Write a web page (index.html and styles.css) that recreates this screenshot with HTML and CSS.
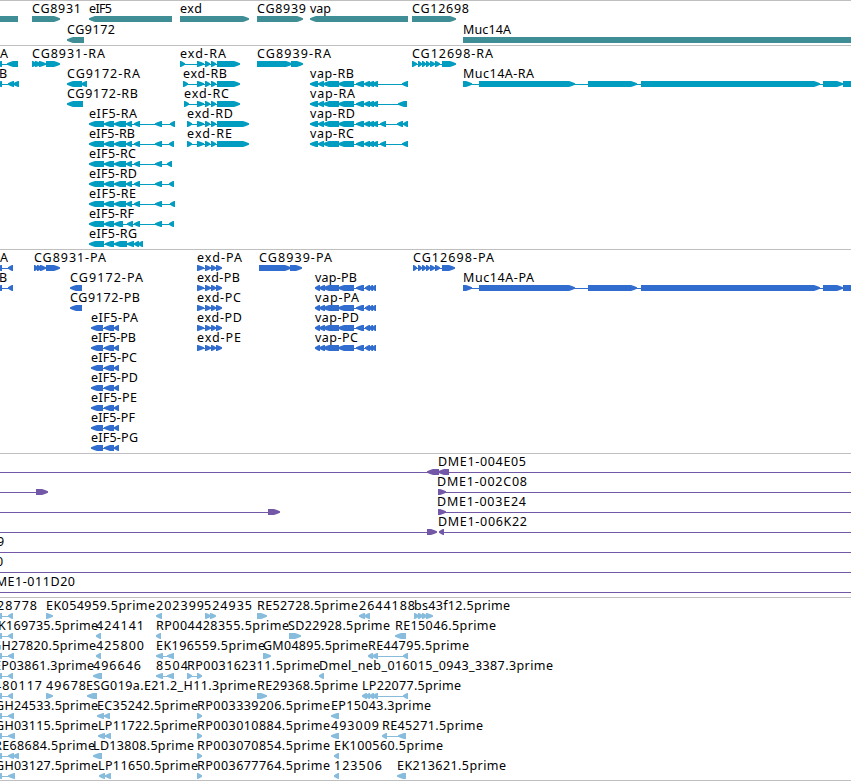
FILE: index.html
```html
<!DOCTYPE html>
<html lang="en">
<head>
    <meta charset="UTF-8">
    <title>Genome tracks</title>
    <link rel="stylesheet" href="styles.css">
</head>
<body>
    <main id="browser"></main>
    <script src="tracks.js"></script>
</body>
</html>
```

FILE: styles.css
```css
body {
    margin: 0;
    background: #fff;
    overflow: hidden;
}
#browser {
    width: 851px;
    border-bottom: 1px solid #bfbfbf;
}
.track {
    border-top: 1px solid #bfbfbf;
    padding-bottom: 3px;
}
.row {
    display: block;
    width: 851px;
    height: 20px;
    overflow: visible;
}
.row text {
    font: 12.5px "Noto Sans", sans-serif;
    fill: #000;
}
.genes {
    color: #3f8e95;
    padding-bottom: 2px;
}
.genes .row {
    height: 21px;
}
.transcripts {
    color: #009dc0;
}
.proteins {
    color: #316dce;
}
.clones {
    color: #7358a8;
}
.ests {
    color: #87bcdd;
    padding-bottom: 2px;
}
.row path,
.row rect {
    fill: currentColor;
}
```

FILE: tracks.js
```js
// feature: [label, label start, label end, strand, [exon start, exon end, ...]]
const exdR = [197,204, 205,210, 211,216];
const exdP = [197,204, 205,211, 211,216, 216,222];
const vapR = [310,318, 318,324, 323,339, 338,354, 356,364, 364,370, 368,374, 372,378];
const vapP = [315,320, 319,325, 323,339, 338,354, 356,364, 365,370, 369,373, 372,376];
const eifR = [89,104, 104,114, 114,126, 126,132, 134,140, 155,162];
const eifP = [91,103, 104,114, 114,119];
const muc = [463,472, 479,575, 588,637, 641,820, 823,843, 843,870];
const L = -30, R = 880;

const tracks = [
    { name: 'genes', rows: [
        [['', 0, 0, '-', [L,18]],
         ['CG8931', 32, 81, '+', [32,60]],
         ['eIF5', 89, 112, '-', [89,172]],
         ['exd', 180, 202, '+', [180,249]],
         ['CG8939', 257, 306, '+', [257,303]],
         ['vap', 310, 331, '-', [310,408]],
         ['CG12698', 412, 469, '+', [412,456]]],
        [['CG9172', 67, 115, '-', [67,84]],
         ['Muc14A', 463, 511, '+', [463,R]]]
    ]},
    { name: 'transcripts', rows: [
        [['A', 0, 8, '-', [-4,2, 7,18]],
         ['CG8931-RA', 32, 105, '+', [32,37, 35,41, 39,46, 46,60]],
         ['exd-RA', 180, 226, '+', [180,185, ...exdR, 217,240]],
         ['CG8939-RA', 257, 331, '+', [257,292, 291,303]],
         ['CG12698-RA', 412, 493, '+', [412,417, 418,422, 422,426, 426,430, 430,435, 435,440, 442,456]]],
        [['B', -1, 6, '-', [-4,2, 8,14, 13,19]],
         ['CG9172-RA', 67, 140, '-', [67,82, 81,87]],
         ['exd-RB', 183, 227, '+', [183,188, ...exdR, 217,240]],
         ['vap-RB', 310, 354, '-', [...vapR, 402,408]],
         ['Muc14A-RA', 463, 534, '+', muc]],
        [['CG9172-RB', 67, 138, '-', [67,83]],
         ['exd-RC', 184, 229, '+', [184,189, ...exdR, 217,240]],
         ['vap-RA', 310, 355, '-', [...vapR, 398,407]]],
        [['eIF5-RA', 89, 137, '-', [...eifR, 170,175]],
         ['exd-RD', 187, 233, '+', [187,192, ...exdR, 217,249]],
         ['vap-RD', 310, 355, '-', [...vapR, 380,386, 397,403, 403,408]]],
        [['eIF5-RB', 89, 135, '-', [...eifR, 169,174]],
         ['exd-RE', 187, 232, '+', [187,192, ...exdR, 217,249]],
         ['vap-RC', 310, 354, '-', [...vapR, 380,386, 402,408]]],
        [['eIF5-RC', 89, 136, '-', [...eifR, 167,172]]],
        [['eIF5-RD', 89, 137, '-', [...eifR, 169,174]]],
        [['eIF5-RE', 89, 136, '-', [...eifR, 170,175]]],
        [['eIF5-RF', 89, 134, '-', [89,104, 104,114, 114,123, 127,133, 134,140, 155,162, 169,174]]],
        [['eIF5-RG', 89, 137, '-', [89,104, 105,114, 114,127, 127,134, 134,139, 138,143]]]
    ]},
    { name: 'proteins', rows: [
        [['A', 0, 9, '-', [-4,2, 8,13]],
         ['CG8931-PA', 34, 106, '+', [34,38, 37,42, 40,46, 46,60]],
         ['exd-PA', 197, 242, '+', exdP],
         ['CG8939-PA', 259, 332, '+', [259,291, 290,302]],
         ['CG12698-PA', 413, 494, '+', [413,417, 418,422, 422,426, 426,430, 430,435, 435,440, 442,455]]],
        [['B', -1, 7, '-', [-4,2, 8,13]],
         ['CG9172-PA', 70, 143, '-', [70,82]],
         ['exd-PB', 197, 240, '+', exdP],
         ['vap-PB', 315, 357, '-', vapP],
         ['Muc14A-PA', 463, 534, '+', muc]],
        [['CG9172-PB', 70, 140, '-', [70,82]],
         ['exd-PC', 197, 241, '+', exdP],
         ['vap-PA', 315, 359, '-', vapP]],
        [['eIF5-PA', 91, 138, '-', eifP],
         ['exd-PD', 197, 242, '+', exdP],
         ['vap-PD', 315, 359, '-', vapP]],
        [['eIF5-PB', 91, 136, '-', eifP],
         ['exd-PE', 197, 241, '+', exdP],
         ['vap-PC', 315, 358, '-', vapP]],
        [['eIF5-PC', 91, 137, '-', eifP]],
        [['eIF5-PD', 91, 138, '-', eifP]],
        [['eIF5-PE', 91, 137, '-', eifP]],
        [['eIF5-PF', 91, 135, '-', eifP]],
        [['eIF5-PG', 91, 138, '-', eifP]]
    ]},
    { name: 'clones', rows: [
        [['', 0, 0, '-', [L,-20, 427,439]],
         ['DME1-004E05', 438, 526, '-', [438,449, 870,R]]],
        [['', 0, 0, '+', [L,-20, 36,48]],
         ['DME1-002C08', 437, 527, '+', [438,446, 870,R]]],
        [['', 0, 0, '+', [L,-20, 268,280]],
         ['DME1-003E24', 437, 526, '+', [438,446, 870,R]]],
        [['', 0, 0, '+', [L,-20, 427,437]],
         ['DME1-006K22', 438, 527, '-', [439,444, 870,R]]],
        [['9', -3, 5, '+', [L,-20, 870,R]]],
        [['0', -4, 4, '+', [L,-20, 870,R]]],
        [['DME1-011D20', -14, 75, '+', [L,-20, 870,R]]]
    ]},
    { name: 'ests', rows: [
        [['28778', -3, 37, '-', [-4,2, 8,13]],
         ['EK054959.5prime', 46, 155, '+', [46,53]],
         ['202399', 156, 204, '-', [156,162]],
         ['524935', 204, 252, '+', [205,211, 210,216]],
         ['RE52728.5prime', 257, 358, '+', [257,267]],
         ['2644188', 359, 415, '-', [359,365, 364,370]],
         ['bs43f12.5prime', 414, 510, '+', [414,419, 418,423, 422,427, 426,433]]],
        [['K169735.5prime', -2, 98, '-', [-4,2, 8,13]],
         ['424141', 96, 144, '-', [96,101]],
         ['RP004428355.5prime', 156, 289, '-', [156,161]],
         ['SD22928.5prime', 288, 390, '+', [289,301]],
         ['RE15046.5prime', 395, 496, '-', [395,406]]],
        [['GH27820.5prime', -8, 96, '-', [-4,2, 8,14]],
         ['425800', 96, 144, '-', [96,101]],
         ['EK196559.5prime', 156, 265, '-', [156,163, 167,174]],
         ['GM04895.5prime', 263, 368, '+', [263,271]],
         ['RE44795.5prime', 368, 469, '-', [368,373, 372,378, 403,408]]],
        [['EP03861.3prime', -6, 94, '-', [-4,2, 8,13]],
         ['496646', 93, 141, '-', [93,102]],
         ['8504', 156, 188, '-', [156,163, 167,174]],
         ['RP003162311.5prime', 187, 320, '+', [187,192, 197,202]],
         ['Dmel_neb_016015_0943_3387.3prime', 319, 553, '-', [319,324]]],
        [['480117', -6, 42, '-', [-4,2, 8,13]],
         ['49678', 46, 86, '+', [46,53]],
         ['ESG019a.E21.2_H11.3prime', 86, 256, '-', [87,97]],
         ['RE29368.5prime', 257, 358, '+', [257,267]],
         ['LP22077.5prime', 362, 461, '-', [362,367, 366,370, 369,374, 372,378, 403,408]]],
        [['GH24533.5prime', -5, 98, '-', [-4,2, 8,14]],
         ['EC35242.5prime', 97, 198, '-', [97,104, 104,110]],
         ['RP003339206.5prime', 197, 330, '+', [197,202]],
         ['EP15043.3prime', 331, 431, '-', [331,339]]],
        [['GH03115.5prime', -5, 98, '-', [-4,2, 8,15]],
         ['LP11722.5prime', 98, 197, '-', [98,105, 105,111]],
         ['RP003010884.5prime', 197, 330, '+', [197,202]],
         ['493009', 331, 379, '-', [331,339]],
         ['RE45271.5prime', 382, 483, '-', [382,387, 398,406]]],
        [['RE68684.5prime', -6, 95, '-', [-4,2, 8,14, 13,19]],
         ['LD13808.5prime', 93, 194, '-', [93,102]],
         ['RP003070854.5prime', 197, 330, '+', [197,202]],
         ['EK100560.5prime', 334, 443, '-', [334,339]]],
        [['GH03127.5prime', -5, 98, '-', [-4,2, 8,15]],
         ['LP11650.5prime', 98, 198, '-', [99,105, 105,111]],
         ['RP003677764.5prime', 197, 330, '+', [197,202]],
         ['123506', 334, 382, '-', [334,339]],
         ['EK213621.5prime', 397, 506, '-', [397,406]]]
    ]}
];

// box with a slightly rounded point on the side the strand runs to
function exonPath(start, end, strand) {
    const head = Math.min(6, end - start - 1);
    const tip = strand === '+' ? end : start;
    const back = strand === '+' ? start : end;
    const dir = strand === '+' ? -1 : 1;
    const neck = tip + dir * head;
    const mid = tip + dir * head / 2;
    return `M${back} 15H${neck}L${mid} 15.9L${tip} 17.3V18.7L${mid} 20.1L${neck} 21H${back}Z`;
}

function drawFeature([label, x, labelEnd, strand, exons]) {
    const first = exons[0];
    const last = exons[exons.length - 1];
    let svg = '';
    if (exons.length > 2) {
        svg += `<rect x="${first + 2}" y="18" width="${last - first - 4}" height="1"/>`;
    }
    for (let i = 0; i < exons.length; i += 2) {
        svg += `<path d="${exonPath(exons[i], exons[i + 1], strand)}"/>`;
    }
    if (label) {
        svg += `<text x="${x}" y="12" textLength="${labelEnd - x}">${label}</text>`;
    }
    return svg;
}

document.getElementById('browser').innerHTML = tracks.map(track =>
    `<section class="track ${track.name}">` +
    track.rows.map(row => `<svg class="row">${row.map(drawFeature).join('')}</svg>`).join('') +
    '</section>'
).join('');
```
